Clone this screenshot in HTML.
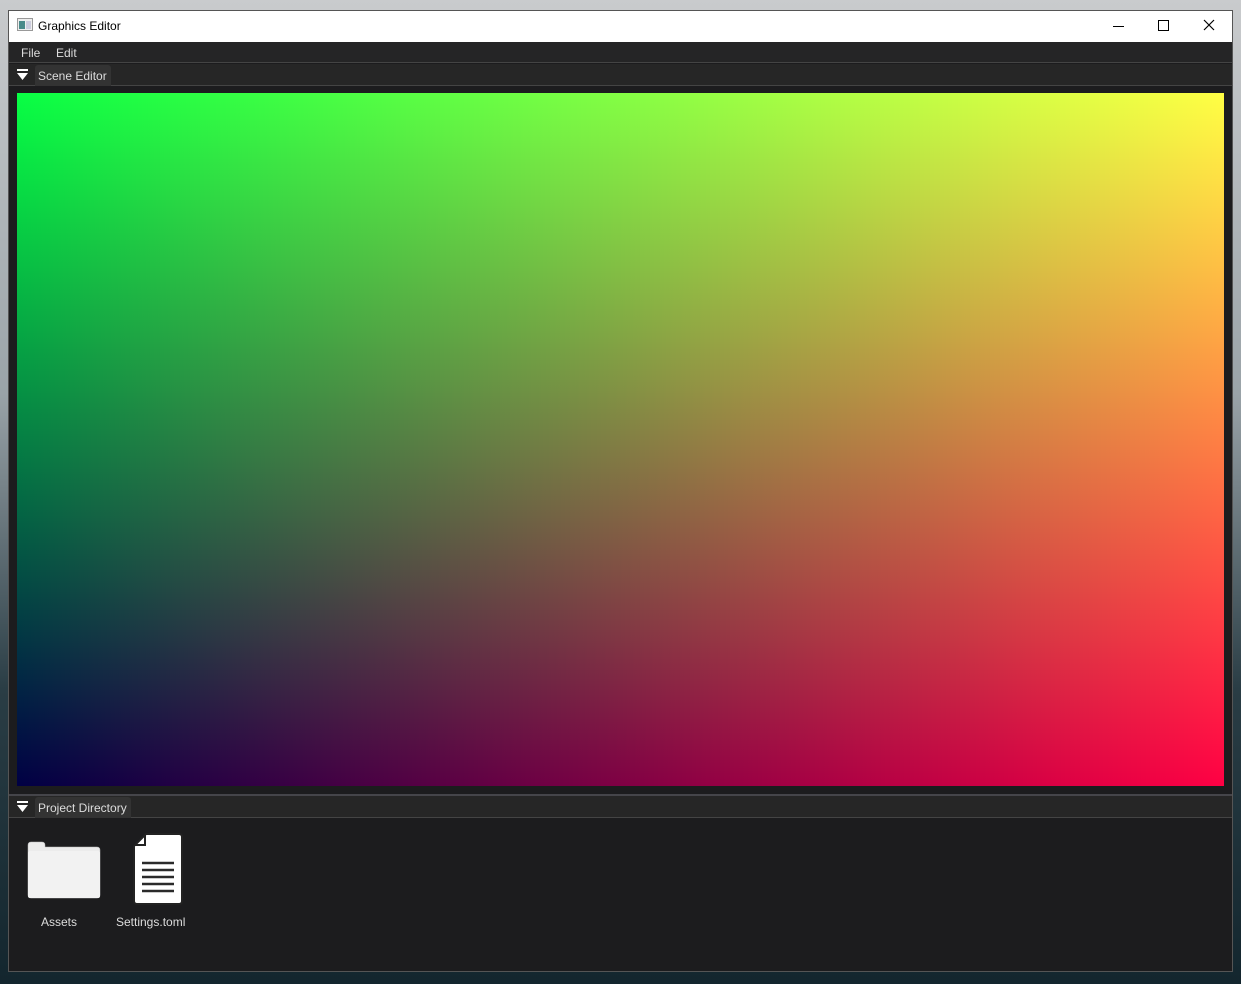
<!DOCTYPE html><html><head><style>
*{margin:0;padding:0;box-sizing:border-box}
body{width:1241px;height:984px;overflow:hidden;background:linear-gradient(#c9cbcd 0%,#9aa3a8 40%,#2a3d45 70%,#13262e 100%);font-family:"Liberation Sans",sans-serif;position:relative}
.win{position:absolute;left:8px;top:10px;width:1225px;height:962px;background:#1c1c1e;border:1px solid #555}
.title{position:absolute;left:0;top:0;width:100%;height:31px;background:#fff;color:#000;font-size:12px}
.menu{position:absolute;top:31px;left:0;width:100%;height:21px;background:#252526;color:#ddd;font-size:12px;border-bottom:1px solid #444}
.hdr{position:absolute;left:0;width:100%;height:22px;background:#262626;border-bottom:1px solid #444}
.tab{position:absolute;left:26px;top:1px;height:21px;background:#333;color:#ddd;font-size:12px;padding:4px 4px 0 3px;border-radius:3px 3px 0 0}
.tri{position:absolute;left:8px;top:5px;width:11px}
.canvas{position:absolute;left:8px;top:82px;width:1207px;height:693px;background:linear-gradient(to right,rgba(0,0,0,1),rgb(255,0,0)),linear-gradient(rgb(8,255,0),rgb(0,0,0)),rgb(0,0,68);background-blend-mode:screen}
.lbl{position:absolute;color:#ddd;font-size:12px}
</style></head><body>
<div class="win">
<div class="title">
<svg style="position:absolute;left:8px;top:7px" width="16" height="13"><rect x=".5" y=".5" width="15" height="12" fill="#eee" stroke="#999"/><rect x="2" y="3" width="6" height="8" fill="#4a8a8a"/><rect x="9" y="3" width="5" height="8" fill="#ccd"/></svg>
<span style="position:absolute;left:29px;top:8px">Graphics Editor</span>
<div style="position:absolute;left:1104px;top:15px;width:11px;height:1px;background:#000"></div>
<div style="position:absolute;left:1149px;top:9px;width:11px;height:11px;border:1px solid #000"></div>
<svg style="position:absolute;left:1194px;top:8px" width="12" height="12"><path d="M1 1L11 11M11 1L1 11" stroke="#000" stroke-width="1.2"/></svg>
</div>
<div class="menu"><span style="position:absolute;left:12px;top:4px">File</span><span style="position:absolute;left:47px;top:4px">Edit</span></div>
<div class="hdr" style="top:53px"><svg class="tri" height="12"><rect x="0" y="0" width="11" height="2" fill="#fff"/><path d="M0 4H11L5.5 11Z" fill="#fff"/></svg><div class="tab">Scene Editor</div></div>
<div class="canvas"></div>
<div style="position:absolute;left:0;top:783px;width:100%;height:2px;background:#45454a"></div>
<div class="hdr" style="top:785px"><svg class="tri" height="12"><rect x="0" y="0" width="11" height="2" fill="#fff"/><path d="M0 4H11L5.5 11Z" fill="#fff"/></svg><div class="tab">Project Directory</div></div>
<svg style="position:absolute;left:17px;top:830px" width="76" height="60"><path d="M2 4Q2 1 5 1H16Q19 1 19 4V6H71Q74 6 74 9V54Q74 57 71 57H5Q2 57 2 54Z" fill="#ececec" stroke="#bbb" stroke-width=".5"/><rect x="2" y="10" width="72" height="47" rx="2" fill="#f2f2f2"/></svg>
<svg style="position:absolute;left:123px;top:820px" width="52" height="76"><path d="M14 3H47Q50 3 50 6V70Q50 73 47 73H5Q2 73 2 70V15Z" fill="#fff" stroke="#222" stroke-width="2"/><path d="M13 4V14H3Z" fill="#fff" stroke="#222" stroke-width="2"/><g stroke="#2a2a2a" stroke-width="2.5"><path d="M10 32H42M10 39H42M10 46H42M10 53H42M10 60H42"/></g></svg>
<div class="lbl" style="left:32px;top:904px">Assets</div>
<div class="lbl" style="left:107px;top:904px">Settings.toml</div>
</div>
</body></html>
